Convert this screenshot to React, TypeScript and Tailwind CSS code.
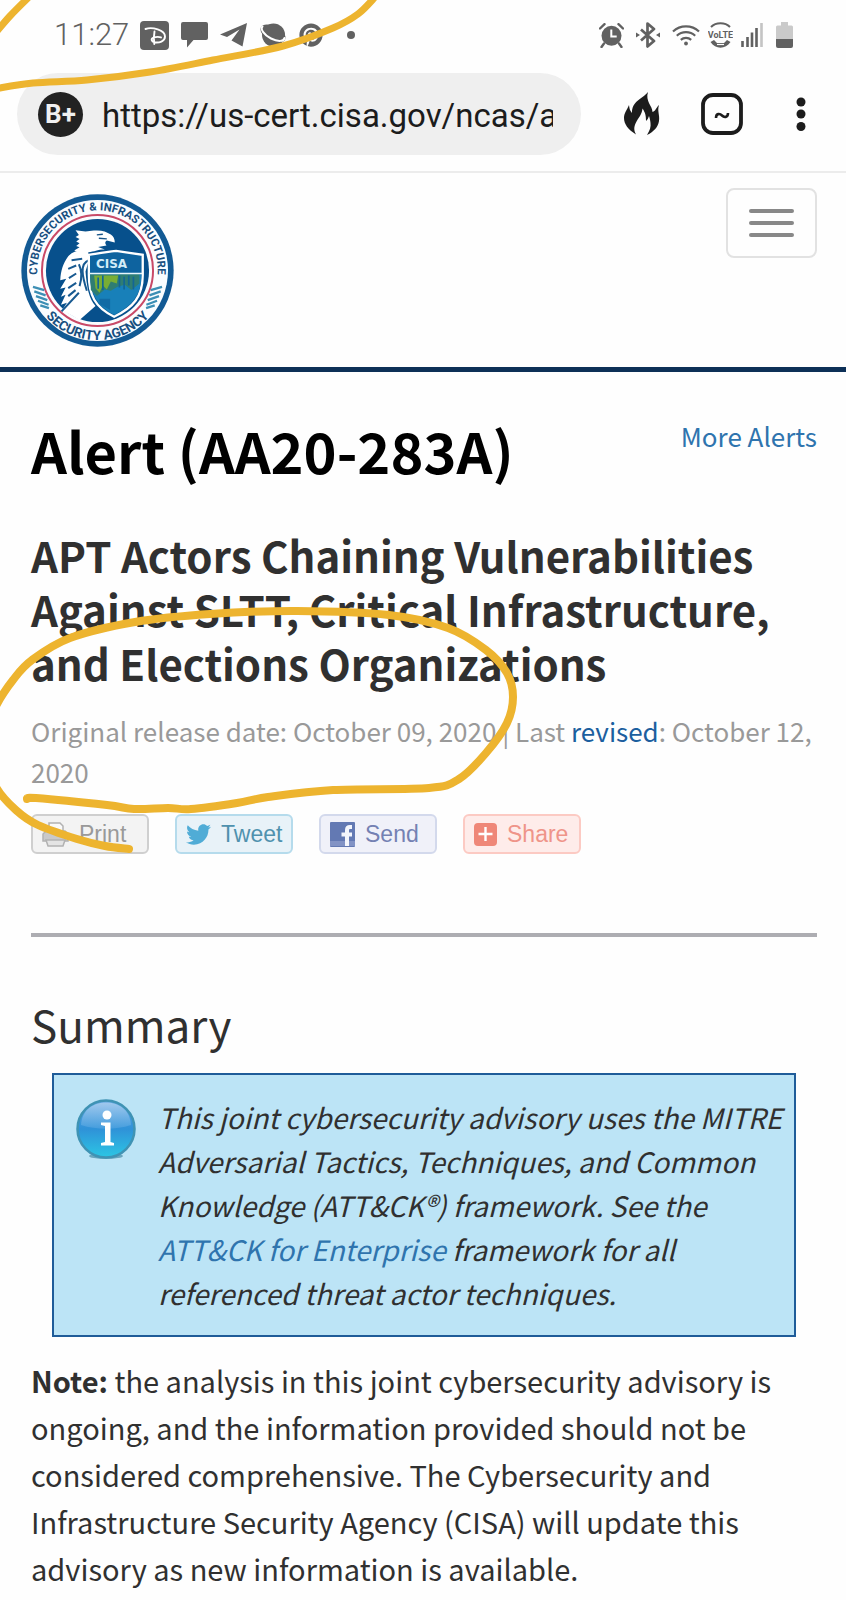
import type { ReactNode } from "react";
import { FaTwitter, FaPinterest } from "react-icons/fa";

const SANS = "font-['Noto_Sans_CJK_SC','Noto_Sans',sans-serif]";
const LINK = "text-[#2f74ae]";

function curve(points: number[][]) {
  let d = `M${points[0][0]} ${points[0][1]}`;
  for (let i = 0; i < points.length - 1; i++) {
    const p0 = points[i - 1] ?? points[i];
    const p1 = points[i];
    const p2 = points[i + 1];
    const p3 = points[i + 2] ?? p2;
    d += ` C${p1[0] + (p2[0] - p0[0]) / 6} ${p1[1] + (p2[1] - p0[1]) / 6} ${p2[0] - (p3[0] - p1[0]) / 6} ${p2[1] - (p3[1] - p1[1]) / 6} ${p2[0]} ${p2[1]}`;
  }
  return d;
}

const TOP_STROKE = [
  [-6, 89], [33, 83], [87, 80], [150, 72], [213, 60], [283, 46], [333, 28], [358, 14], [376, -4],
];
const CORNER_STROKE = [[-8, 37], [10, 16], [32, -6]];
const CIRCLE_STROKE = [
  [27, 799], [36, 798], [107, 805], [134, 809], [168, 808], [191, 809], [237, 803], [268, 797],
  [333, 790], [429, 788], [459, 779], [486, 753], [507, 723], [513, 697], [507, 673], [486, 650],
  [448, 628], [389, 615], [297, 611], [210, 614], [135, 622], [70, 638], [32, 660], [13, 680],
  [-4, 706], [-20, 745], [-4, 787], [17, 811], [38, 825], [77, 839], [105, 846], [129, 849],
];

function Markup() {
  return (
    <svg
      aria-hidden="true"
      viewBox="0 0 846 1600"
      className="pointer-events-none absolute inset-x-0 top-0 w-full"
      fill="none"
      stroke="#edb42f"
      strokeLinecap="round"
      strokeLinejoin="round"
    >
      <path d={curve(TOP_STROKE)} strokeWidth="7" />
      <path d={curve(CORNER_STROKE)} strokeWidth="7" />
      <path d={curve(CIRCLE_STROKE)} strokeWidth="8" />
    </svg>
  );
}

function StatusBar() {
  return (
    <div className="flex items-center justify-between pt-[19px] pr-[53px] pl-[54px] text-[#616161]">
      <div className="flex h-8 items-center">
        <time className="w-[86px] font-['Roboto',sans-serif] text-[31px] leading-8 font-light">11:27</time>
        <svg aria-hidden="true" viewBox="0 0 29 29" className="w-[29px]">
          <rect width="29" height="29" rx="4" fill="currentColor" />
          <path d="M5.500 8C12 5.500 25 9 25 15.500c0 5-6 6.500-10.500 5.800-3-.5-4-3.300-1-4.600 2.500-1 5.500-1 7.500-.3M14.500 10.500c-.8 4-.8 8-.2 12.500" fill="none" stroke="#fff" strokeWidth="1.900" strokeLinecap="round" />
        </svg>
        <svg aria-hidden="true" viewBox="0 0 27 26" className="ml-3 w-[27px]">
          <path d="M2 0h23q2 0 2 2v14q0 2-2 2H12.500L6 25.500V18H2q-2 0-2-2V2q0-2 2-2z" fill="currentColor" />
        </svg>
        <svg aria-hidden="true" viewBox="0 0 27 24" className="ml-3 w-[27px]">
          <path d="M27 0 22.500 23.500 11.500 17.500 19.500 6.500 7 14 0 11.500z" fill="currentColor" />
        </svg>
        <svg aria-hidden="true" viewBox="0 0 28 24" className="ml-3 w-7">
          <circle cx="14.500" cy="12" r="11.500" fill="currentColor" />
          <ellipse cx="14" cy="10.500" rx="13.500" ry="7.300" transform="rotate(27 14 10.500)" fill="currentColor" />
          <path d="M3.500 3.500C1 6 5 12 12 15.500S25 18.500 25.500 15" fill="none" stroke="#fff" strokeWidth="2" strokeLinecap="round" />
        </svg>
        <FaPinterest aria-hidden="true" className="ml-3 size-6" />
        <span className="ml-6 size-2 rounded-full bg-[#616161]" />
      </div>
      <div className="flex h-8 items-center">
        <svg aria-hidden="true" viewBox="0 0 25 25" className="w-[25px]">
          <circle cx="12.500" cy="12.800" r="10" fill="currentColor" />
          <path d="M1 5.500 5.500 1.200M24 5.500 19.500 1.200M5 20.500 2.500 24M20 20.500l2.500 3.500" stroke="currentColor" strokeWidth="2.400" strokeLinecap="round" />
          <path d="M12.300 6.500v7h5.400" fill="none" stroke="#fff" strokeWidth="2" />
        </svg>
        <svg aria-hidden="true" viewBox="0 0 24 26" className="ml-3 w-6">
          <path d="M5 7.500 18 19l-6.500 5.500v-23L18 7 5 18.500" fill="none" stroke="currentColor" strokeWidth="2.700" strokeLinejoin="round" />
          <path d="M0 10.500 4 13l-4 2.500zM24 10.500 20 13l4 2.500z" fill="currentColor" />
        </svg>
        <svg aria-hidden="true" viewBox="0 0 28 22" className="ml-3 w-7">
          <path d="M1 7.500a19 19 0 0 1 26 0M4.800 11.800a13.500 13.500 0 0 1 18.400 0M8.800 15.800a8 8 0 0 1 10.400 0" fill="none" stroke="currentColor" strokeWidth="2.200" />
          <circle cx="14" cy="19.500" r="1.900" fill="currentColor" />
        </svg>
        <svg aria-hidden="true" viewBox="0 0 25 26" className="ml-2 w-[25px]">
          <path d="M3 5C8 0 17 0 22 5" fill="none" stroke="currentColor" strokeWidth="2" />
          <text x="12.500" y="15.500" textAnchor="middle" fontSize="9" fontWeight="700" fontFamily="Roboto" fill="currentColor">VoLTE</text>
          <path d="M2.500 20l3.500-2 3 3h7l3-3 3.500 2c-5 7.500-15 7.500-20 0z" fill="currentColor" />
          <path d="M9 22.500h7" stroke="#fff" strokeWidth="1.200" />
        </svg>
        <svg aria-hidden="true" viewBox="0 0 22 24" className="ml-2 w-[22px]">
          <path d="M1.500 24v-6M6.500 24v-10M11 24V9.500M15.500 24V5" stroke="currentColor" strokeWidth="2.600" />
          <path d="M20.500 24V0" stroke="#c4c4c4" strokeWidth="2.600" />
        </svg>
        <svg aria-hidden="true" viewBox="0 0 17 26" className="ml-[13px] w-[17px]">
          <path d="M5 0h7v3.500h3.500q1.500 0 1.500 1.500v13H0V5q0-1.500 1.500-1.500H5z" fill="#cacaca" />
          <path d="M0 17h17v7q0 2-2 2H2q-2 0-2-2z" fill="currentColor" />
        </svg>
      </div>
    </div>
  );
}

function BrowserBar() {
  return (
    <div className="flex items-center border-b-2 border-[#ececec] pt-[22px] pr-10 pb-4 pl-[17px]">
      <div className="flex h-[82px] min-w-0 flex-1 items-center rounded-full bg-[#efefef] pr-7 pl-[21px]">
        <span className="flex size-[45px] shrink-0 items-center justify-center rounded-full bg-[#222222] font-['Roboto',sans-serif] text-[26px] leading-none font-bold text-[#f0f0f0]">
          B+
        </span>
        <input
          aria-label="Address"
          readOnly
          value="https://us-cert.cisa.gov/ncas/alerts/aa20-283a"
          className="ml-[19px] w-full min-w-0 bg-transparent pt-1 font-['Roboto',sans-serif] text-[33px] text-[#1c1c1c] outline-none"
        />
      </div>
      <button aria-label="Clear data" className="ml-[43px]">
        <svg viewBox="0 0 36 44" className="w-9">
          <path d="M24 0C21 9 28.500 14 28.500 20c3-1 3.500-4 6.500-7-2 6 1 10 0 16-1 6-5 10.500-12 14 3-5 4-8 3.500-12-.3-2.500-.5-4-1.500-7-1 2-1 3.500-3 5 0-5-.5-8-3.500-12.500-.5 6-4 9-6.500 14-2.500 5-2 8 0 12C4 37.500 0 32 0 26c0-5 3-8 5-13 .5 3 .5 5.500 3 8C8 9 17 8 24 0z" fill="#1c1c1c" />
        </svg>
      </button>
      <button aria-label="Tabs" className="ml-[41px]">
        <svg viewBox="0 0 42 42" className="w-[42px]" fill="none" stroke="#1c1c1c">
          <rect x="2" y="2" width="38" height="38" rx="10" strokeWidth="3.800" />
          <path d="M15 25c0-5 4-4.500 6-2.500s6 2.500 6-2.500" strokeWidth="2.600" />
        </svg>
      </button>
      <button aria-label="Menu" className="ml-[53px]">
        <svg viewBox="0 0 10 34" className="w-[10px]" fill="#1c1c1c">
          <circle cx="5" cy="5" r="4.500" />
          <circle cx="5" cy="17" r="4.500" />
          <circle cx="5" cy="29.500" r="4.500" />
        </svg>
      </button>
    </div>
  );
}

function Seal() {
  return (
    <svg role="img" aria-label="CISA seal" viewBox="34 39 460 460" className="w-[153px]">
      <defs>
        <path id="arcTop" d="M86 302A181 181 0 1 1 442 302" />
        <path id="arcBottom" d="M72 345A205 205 0 0 0 456 345" />
      </defs>
      <circle cx="264" cy="269" r="229" fill="#125a94" />
      <circle cx="264" cy="269" r="212" fill="#fbfdff" />
      <circle cx="264" cy="269" r="167" fill="none" stroke="#c94a68" strokeWidth="6" />
      <circle cx="264" cy="269" r="155" fill="#07508c" />
      <g fill="#174f80" fontFamily="Roboto,'Liberation Sans',sans-serif" fontWeight="700" textAnchor="middle">
        <text fontSize="34">
          <textPath href="#arcTop" startOffset="50%">CYBERSECURITY &amp; INFRASTRUCTURE</textPath>
        </text>
        <text fontSize="40">
          <textPath href="#arcBottom" startOffset="50%">SECURITY AGENCY</textPath>
        </text>
      </g>
      <path d="M70 318l34 10M74 332l34 12M79 346l34 12M85 360l32 12M92 374l26 8M458 318l-34 10M454 332l-34 12M449 346l-34 12M443 360l-32 12M436 374l-26 8" stroke="#3c8fb5" strokeWidth="7" />
      <path d="M198 148l30 4 25-3c22-2 38 3 51 12 8 5 12 14 12 24l-24-6c-6 4-6 9-1 15l-25 4 20 8c-24 0-30 7-50 8-20 3-32 0-42-5l16-10-10-4 10-8-10-5 10-8-12-6 10-6z" fill="#fff" />
      <path d="M262 162l18-2M268 172l24 2" stroke="#175488" strokeWidth="4" />
      <path d="M176 226c16-16 40-22 60-16l2 28-10 34c4 50 10 80 30 104l-48 42-52-30 14-22-18 6 14-30-14 6 14-28-16 4 18-30-18 4c2-30 8-50 24-72z" fill="#fff" />
      <path d="M186 238l32-4M176 264l24-10M178 292l22-14M176 322l24-16M176 346l22-18M208 250c10 20 10 40 2 66M238 238c-28 10-20 48-6 92M156 392l52-56" fill="none" stroke="#185a91" strokeWidth="6" />
      <path d="M238 222c26-4 48-8 82-12 28 4 52 8 80 12v60c0 66-28 98-86 126-58-28-76-66-76-126z" fill="#0e639f" stroke="#fff" strokeWidth="7" />
      <path d="M242 280h154c0 60-26 94-82 122-52-28-70-62-72-122z" fill="#1880b9" />
      <path d="M242 280h148v28l-24 20-20-16-22 6-20 12-18-4-24 20-18-18z" fill="#2f7d72" />
      <path d="M254 284h72l-4 24-18-6-12 24-12-12-10 22-12-14z" fill="#78ad35" />
      <path d="M266 290v34M280 284v44M330 284v36M344 288v38M358 284v30M372 288v38" stroke="#126596" strokeWidth="5" />
      <path d="M270 354h32v34l-32-18z" fill="#126ba5" />
      <path d="M238 278h160" stroke="#e7f5fb" strokeWidth="5" />
      <text x="306" y="261" textAnchor="middle" fontSize="36" fontWeight="700" fill="#d3ecf7" fontFamily="'DejaVu Sans',sans-serif">CISA</text>
    </svg>
  );
}

function ShareButton({ tone, label, children }: { tone: string; label: string; children: ReactNode }) {
  return (
    <button className={`flex h-10 w-[118px] items-center gap-[10px] rounded-md border-2 pl-[9px] font-['Liberation_Sans',sans-serif] text-[23px] leading-none ${tone}`}>
      {children}
      <span>{label}</span>
    </button>
  );
}

function ShareRow() {
  return (
    <div className="mt-[22px] flex gap-[26px]">
      <ShareButton tone="border-[#cfcfcf] bg-[#f3f3f3] text-[#999999]" label="Print">
        <svg aria-hidden="true" viewBox="0 0 27 25" className="w-[27px]" stroke="#b2b2b2" strokeWidth="1.500">
          <path d="M7 10V1h11l3 3v6" fill="#fafafa" />
          <path d="M4 9h19l3 3v7H1v-7z" fill="#c9c9c9" />
          <path d="M4 18h19l-2 6H6z" fill="#e4e4e4" />
        </svg>
      </ShareButton>
      <ShareButton tone="border-[#b5dbec] bg-[#e8f2f8] text-[#4f91ae]" label="Tweet">
        <FaTwitter aria-hidden="true" className="size-[25px] text-[#50acd6]" />
      </ShareButton>
      <ShareButton tone="border-[#d3d9ec] bg-[#f0f1f9] text-[#7481b3]" label="Send">
        <svg aria-hidden="true" viewBox="0 0 25 25" className="w-[25px]">
          <rect width="25" height="25" rx="1" fill="#6379b3" />
          <path d="M0 19h25v5H0z" fill="#8293c5" />
          <path d="M22 5h-2q-3 0-3 3v16M11.500 12.500H22" fill="none" stroke="#f4f6fc" strokeWidth="4" />
        </svg>
      </ShareButton>
      <ShareButton tone="border-[#fccac3] bg-[#feecea] text-[#ef9489]" label="Share">
        <svg aria-hidden="true" viewBox="0 0 23 23" className="w-[23px]">
          <rect width="23" height="23" rx="4" fill="#ef8778" />
          <path d="M11.500 4v14M4.500 11h14" stroke="#fff" strokeWidth="2.400" />
        </svg>
      </ShareButton>
    </div>
  );
}

function InfoIcon() {
  return (
    <svg role="img" aria-label="Information" viewBox="0 0 60 62" className="mt-1 w-[60px] shrink-0 self-start">
      <defs>
        <linearGradient id="ball" x1="0" y1="0" x2="0" y2="1">
          <stop offset="0" stopColor="#5fa5df" />
          <stop offset=".5" stopColor="#2f92d8" />
          <stop offset="1" stopColor="#2cc6e4" />
        </linearGradient>
        <linearGradient id="gloss" x1="0" y1="0" x2="0" y2="1">
          <stop offset="0" stopColor="#b7d5f3" />
          <stop offset="1" stopColor="#4ca1df" />
        </linearGradient>
      </defs>
      <ellipse cx="30" cy="57" rx="17" ry="3" fill="#6aa5bd" />
      <circle cx="30" cy="30" r="28.500" fill="url(#ball)" stroke="#3f93b4" strokeWidth="2.500" />
      <path d="M5 26C6 10 18 3.500 30 3.500S54 10 55 26c-16 5-34 5-50 0z" fill="url(#gloss)" opacity=".75" />
      <circle cx="31" cy="16" r="4.500" fill="#fff" />
      <path d="M25 23.500h9.500V43l3.500 1v2.500H25V44l4-1V27l-4-1z" fill="#fff" />
    </svg>
  );
}

export default function App() {
  return (
    <div className={`relative min-h-screen overflow-hidden bg-[#fefefe] text-[#303030] ${SANS}`}>
      <StatusBar />
      <BrowserBar />

      <header className="flex items-start justify-between border-b-[5px] border-[#0d3057] pt-[15px] pr-[29px] pb-5 pl-[21px]">
        <a href="#home" className="mt-[6px]">
          <Seal />
        </a>
        <button aria-label="Toggle navigation" className="flex h-[70px] w-[91px] flex-col items-center justify-center gap-2 rounded-lg border-2 border-[#e2e2e2]">
          <span className="h-1 w-[45px] rounded-sm bg-[#888888]" />
          <span className="h-1 w-[45px] rounded-sm bg-[#888888]" />
          <span className="h-1 w-[45px] rounded-sm bg-[#888888]" />
        </button>
      </header>

      <main className="pr-[29px] pb-3 pl-[31px]">
        <div className="flex items-start justify-between pt-10">
          <h1 className="text-[56px] leading-[76px] font-bold text-black">Alert (AA20-283A)</h1>
          <a href="#alerts" className={`mt-1 text-[26px] leading-10 ${LINK}`}>More Alerts</a>
        </div>
        <h2 className="mt-10 text-[42px] leading-[54px] font-bold">
          APT Actors Chaining Vulnerabilities Against SLTT, Critical Infrastructure, and Elections Organizations
        </h2>
        <p className="mt-5 text-[26px] leading-[41px] text-[#999999]">
          Original release date: October 09, 2020 | Last <a href="#revisions" className="text-[#1c5f9f]">revised</a>: October 12, 2020
        </p>
        <ShareRow />
        <hr className="mt-[79px] border-t-4 border-[#adadb2]" />

        <h3 className="mt-[57px] text-[44px] leading-[60px]">Summary</h3>
        <aside className="mx-[21px] mt-[19px] flex gap-[22px] border-2 border-[#1f5c99] bg-[#bce4f6] py-5 pr-2 pl-[22px]">
          <InfoIcon />
          <p className="text-[28px] leading-11 italic">
            This joint cybersecurity advisory uses the MITRE Adversarial Tactics, Techniques, and Common Knowledge (ATT&amp;CK®) framework. See the <a href="#attack" className={LINK}>ATT&amp;CK for Enterprise</a> framework for all referenced threat actor techniques.
          </p>
        </aside>
        <p className="mt-5 text-[29px] leading-[47px]">
          <strong className="font-bold">Note:</strong> the analysis in this joint cybersecurity advisory is ongoing, and the information provided should not be considered comprehensive. The Cybersecurity and Infrastructure Security Agency (CISA) will update this advisory as new information is available.
        </p>
      </main>
      <Markup />
    </div>
  );
}
